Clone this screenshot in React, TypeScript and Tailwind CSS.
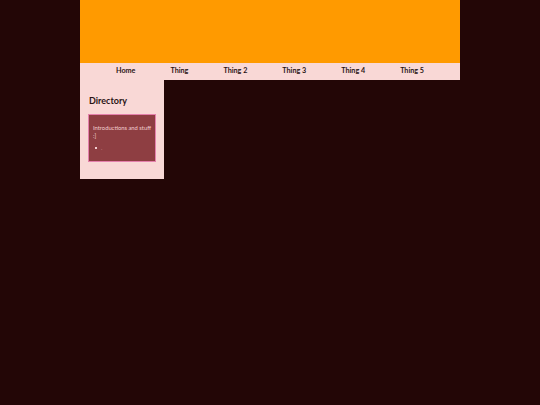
import * as React from 'react';

const navItems = ['Home', 'Thing', 'Thing 2', 'Thing 3', 'Thing 4', 'Thing 5'];

export default function App() {
  return (
    <div
      className="min-h-[405px] w-full bg-[#230606]"
      style={{ fontFamily: 'Lato, "Open Sans", sans-serif' }}
    >
      <div className="mx-auto w-[380px]">
        {/* Banner */}
        <div className="h-[63px] bg-[#ff9a00]" />

        {/* Nav */}
        <nav className="flex h-[17px] items-center gap-[35px] bg-[#f9d8d6] pl-[36px] text-[7.2px] font-bold text-[#2a1414]">
          {navItems.map((item) => (
            <span key={item}>{item}</span>
          ))}
        </nav>

        {/* Sidebar */}
        <aside className="w-[84px] bg-[#f9d8d6] px-2 pb-[17px] pt-[15px]">
          <h2 className="mb-[7px] pl-[1px] text-[9px] font-bold leading-[12px] text-[#2a1414]">
            Directory
          </h2>
          <div className="h-[48px] border border-[#e580ac] bg-[#8e3e42] px-[4px] pt-[9px] text-[5.8px] leading-[8px] text-[#f3cfd0]">
            <p>Introductions and stuff</p>
            <p>:]</p>
            <ul className="mt-[4px] pl-[2px]">
              <li className="flex items-center gap-[4px]">
                <span className="inline-block h-[2px] w-[2px] bg-[#f3cfd0]" />
                <span className="text-[#c98a8c]">.</span>
              </li>
            </ul>
          </div>
        </aside>
      </div>
    </div>
  );
}
